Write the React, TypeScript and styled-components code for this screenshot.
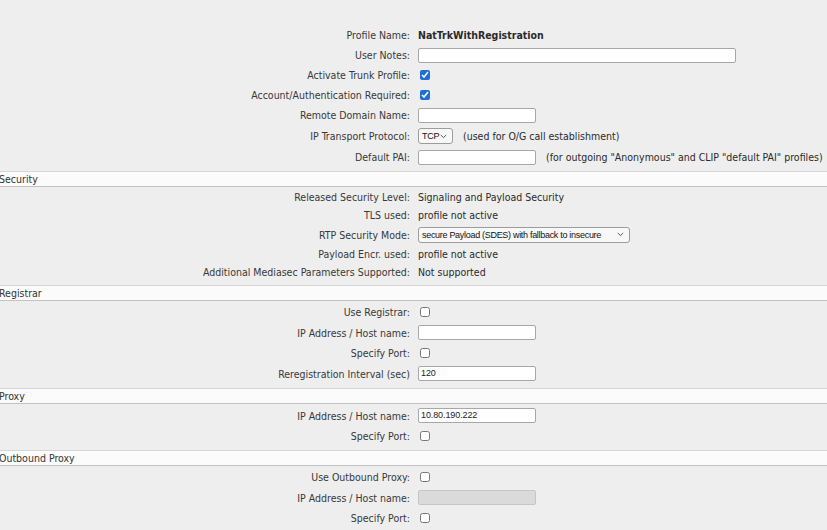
import styled, { createGlobalStyle } from "styled-components";

const GlobalStyle = createGlobalStyle`
  html, body {
    margin: 0;
    padding: 0;
    background: #eeeeee;
  }
  body {
    font-family: "DejaVu Sans Condensed", "DejaVu Sans", sans-serif;
    font-size: 10.5px;
    color: #383838;
    overflow: hidden;
  }
`;

const Page = styled.div`
  width: 827px;
  height: 530px;
  display: flex;
  flex-direction: column;
  padding-top: 25px;
  box-sizing: border-box;
`;

const Section = styled.section`
  display: flex;
  flex-direction: column;
  padding-bottom: 4px;
`;

const SectionHeader = styled.div`
  height: 14px;
  line-height: 14px;
  background: #fbfbfb;
  border-top: 1px solid #d6d6d6;
  border-bottom: 1px solid #c2c2c2;
  margin-bottom: 1px;
  text-indent: -1px;
  color: #333;
`;

const Row = styled.div<{ $h: number }>`
  display: grid;
  grid-template-columns: 410px 1fr;
  column-gap: 8px;
  align-items: center;
  height: ${(p) => p.$h}px;
`;

const Label = styled.div`
  text-align: right;
  white-space: nowrap;
`;

const Value = styled.div<{ $bold?: boolean }>`
  display: flex;
  align-items: center;
  gap: 10px;
  white-space: nowrap;
  color: #2a2a2a;
  font-weight: ${(p) => (p.$bold ? "bold" : "normal")};
`;

const TextBox = styled.div<{ $w: number; $disabled?: boolean }>`
  box-sizing: border-box;
  width: ${(p) => p.$w}px;
  height: 15px;
  border: 1px solid ${(p) => (p.$disabled ? "#c6c6c6" : "#a8a8a8")};
  border-radius: 2px;
  background: ${(p) => (p.$disabled ? "#dadada" : "#ffffff")};
  font-family: "Liberation Sans", Arial, sans-serif;
  font-size: 9px;
  line-height: 13px;
  padding-left: 2px;
  letter-spacing: -0.1px;
  color: #222;
`;

const Check = styled.input.attrs({ type: "checkbox", readOnly: true })`
  width: 10px;
  height: 10px;
  margin: 0 0 0 2px;
  accent-color: #1b6fd6;
`;

const Select = styled.div<{ $w: number }>`
  box-sizing: border-box;
  width: ${(p) => p.$w}px;
  height: 16px;
  border: 1px solid #9c9c9c;
  border-radius: 3px;
  background: #f8f8f8;
  display: flex;
  align-items: center;
  justify-content: space-between;
  padding: 0 5px 0 3px;
  font-family: "Liberation Sans", Arial, sans-serif;
  font-size: 9px;
  letter-spacing: -0.3px;
  color: #111;
`;

const Note = styled.span`
  color: #2a2a2a;
`;

const Chevron = () => (
  <svg width="7" height="5" viewBox="0 0 7 5">
    <path d="M0.8 1 L3.5 3.6 L6.2 1" fill="none" stroke="#555" strokeWidth="1" />
  </svg>
);

export default function App() {
  return (
    <Page>
      <GlobalStyle />
      <Section>
        <Row $h={20}>
          <Label>Profile Name:</Label>
          <Value $bold>NatTrkWithRegistration</Value>
        </Row>
        <Row $h={20}>
          <Label>User Notes:</Label>
          <Value><TextBox $w={318} /></Value>
        </Row>
        <Row $h={20}>
          <Label>Activate Trunk Profile:</Label>
          <Value><Check checked /></Value>
        </Row>
        <Row $h={20}>
          <Label>Account/Authentication Required:</Label>
          <Value><Check checked /></Value>
        </Row>
        <Row $h={20}>
          <Label>Remote Domain Name:</Label>
          <Value><TextBox $w={118} /></Value>
        </Row>
        <Row $h={22}>
          <Label>IP Transport Protocol:</Label>
          <Value>
            <Select $w={35}>TCP<Chevron /></Select>
            <Note>(used for O/G call establishment)</Note>
          </Value>
        </Row>
        <Row $h={20}>
          <Label>Default PAI:</Label>
          <Value>
            <TextBox $w={118} />
            <Note>(for outgoing "Anonymous" and CLIP "default PAI" profiles)</Note>
          </Value>
        </Row>
      </Section>

      <Section>
        <SectionHeader>Security</SectionHeader>
        <Row $h={18}>
          <Label>Released Security Level:</Label>
          <Value>Signaling and Payload Security</Value>
        </Row>
        <Row $h={18}>
          <Label>TLS used:</Label>
          <Value>profile not active</Value>
        </Row>
        <Row $h={21}>
          <Label>RTP Security Mode:</Label>
          <Value>
            <Select $w={212}>secure Payload (SDES) with fallback to insecure<Chevron /></Select>
          </Value>
        </Row>
        <Row $h={18}>
          <Label>Payload Encr. used:</Label>
          <Value>profile not active</Value>
        </Row>
        <Row $h={18}>
          <Label>Additional Mediasec Parameters Supported:</Label>
          <Value>Not supported</Value>
        </Row>
      </Section>

      <Section>
        <SectionHeader>Registrar</SectionHeader>
        <Row $h={20}>
          <Label>Use Registrar:</Label>
          <Value><Check checked={false} /></Value>
        </Row>
        <Row $h={21}>
          <Label>IP Address / Host name:</Label>
          <Value><TextBox $w={118} /></Value>
        </Row>
        <Row $h={20}>
          <Label>Specify Port:</Label>
          <Value><Check checked={false} /></Value>
        </Row>
        <Row $h={21}>
          <Label>Reregistration Interval (sec)</Label>
          <Value><TextBox $w={118}>120</TextBox></Value>
        </Row>
      </Section>

      <Section>
        <SectionHeader>Proxy</SectionHeader>
        <Row $h={21}>
          <Label>IP Address / Host name:</Label>
          <Value><TextBox $w={118}>10.80.190.222</TextBox></Value>
        </Row>
        <Row $h={20}>
          <Label>Specify Port:</Label>
          <Value><Check checked={false} /></Value>
        </Row>
      </Section>

      <Section>
        <SectionHeader>Outbound Proxy</SectionHeader>
        <Row $h={20}>
          <Label>Use Outbound Proxy:</Label>
          <Value><Check checked={false} /></Value>
        </Row>
        <Row $h={21}>
          <Label>IP Address / Host name:</Label>
          <Value><TextBox $w={118} $disabled /></Value>
        </Row>
        <Row $h={20}>
          <Label>Specify Port:</Label>
          <Value><Check checked={false} /></Value>
        </Row>
      </Section>
    </Page>
  );
}
